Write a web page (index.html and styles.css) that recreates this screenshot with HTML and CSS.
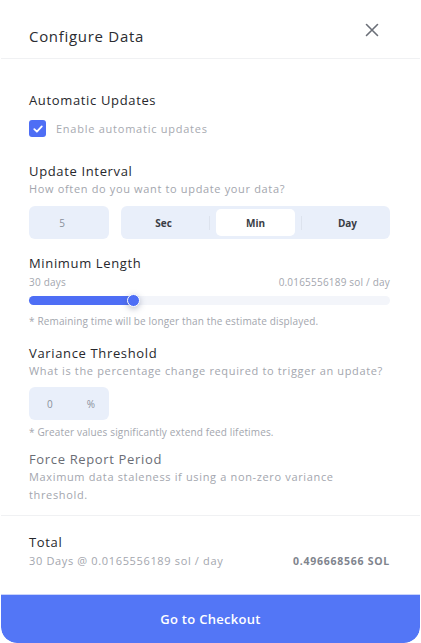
FILE: index.html
```html
<!DOCTYPE html>
<html>
<head>
<meta charset="utf-8">
<link rel="stylesheet" href="styles.css">
</head>
<body>
<div class="card">
  <header class="head">
    <h1 class="title">Configure Data</h1>
    <svg class="close" width="14" height="14" viewBox="0 0 14 14"><path d="M1.5 1.5 L12.5 12.5 M12.5 1.5 L1.5 12.5" stroke="#6b6f78" stroke-width="1.6" stroke-linecap="round"/></svg>
  </header>
  <main class="body">
    <section class="sec sec-auto">
      <h2 class="label">Automatic Updates</h2>
      <label class="check">
        <span class="box"><svg width="12" height="12" viewBox="0 0 12 12"><path d="M2.3 6.2 L4.9 8.7 L9.8 3.4" fill="none" stroke="#fff" stroke-width="1.8" stroke-linecap="round" stroke-linejoin="round"/></svg></span>
        <span class="check-text">Enable automatic updates</span>
      </label>
    </section>
    <section class="sec sec-interval">
      <h2 class="label">Update Interval</h2>
      <p class="desc">How often do you want to update your data?</p>
      <div class="row">
        <div class="field num">5</div>
        <div class="seg">
          <div class="opt">Sec</div>
          <div class="divi"></div>
          <div class="opt active">Min</div>
          <div class="divi"></div>
          <div class="opt">Day</div>
        </div>
      </div>
    </section>
    <section class="sec sec-length">
      <h2 class="label">Minimum Length</h2>
      <div class="meta"><span>30 days</span><span>0.0165556189 sol / day</span></div>
      <div class="track"><div class="fill" style="width:29%"><span class="thumb"></span></div></div>
      <p class="note">* Remaining time will be longer than the estimate displayed.</p>
    </section>
    <section class="sec sec-var">
      <h2 class="label">Variance Threshold</h2>
      <p class="desc">What is the percentage change required to trigger an update?</p>
      <div class="field pct"><span>0</span><span>%</span></div>
      <p class="note">* Greater values significantly extend feed lifetimes.</p>
    </section>
    <section class="sec sec-force">
      <h2 class="label muted">Force Report Period</h2>
      <p class="desc wrap">Maximum data staleness if using a non-zero variance threshold.</p>
    </section>
  </main>
  <footer class="total">
    <h2 class="label">Total</h2>
    <div class="total-row"><span class="desc">30 Days @ 0.0165556189 sol / day</span><span class="sum">0.496668566 SOL</span></div>
  </footer>
  <button class="checkout">Go to Checkout</button>
</div>
</body>
</html>
```
FILE: styles.css
```css
* { box-sizing: border-box; margin: 0; padding: 0; }
html, body { background: #fff; }
body { font-family: "Open Sans", "Noto Sans", sans-serif; color: #25262b; }
.card {
  width: 419px;
  margin: 0 1px;
  height: 643px;
  display: flex;
  flex-direction: column;
  background: #fff;
  border-radius: 0 0 16px 16px;
  overflow: hidden;
}
.head {
  height: 59px;
  display: flex;
  justify-content: space-between;
  align-items: flex-start;
  padding: 26px 41px 0 28px;
  border-bottom: 1px solid #f0f1f3;
}
.title { font-size: 15px; font-weight: 500; letter-spacing: 0.7px; color: #2b2c31; line-height: 20px; }
.close { margin-top: -3px; }
.body { padding: 0 30px 0 28px; flex: 1; }
.label { font-size: 13px; font-weight: 500; letter-spacing: 0.65px; color: #27282d; line-height: 18px; }
.label.muted { color: #6a6d75; }
.desc { font-size: 11px; color: #a3a6ae; letter-spacing: 0.65px; line-height: 18px; }
.sec-auto { padding-top: 32px; }
.check { display: flex; align-items: center; gap: 10px; margin-top: 11px; }
.box { width: 17px; height: 17px; border-radius: 3px; background: #4e6ef5; display: flex; align-items: center; justify-content: center; }
.check-text { font-size: 11px; color: #a7aab1; letter-spacing: 0.75px; }
.sec-interval { padding-top: 25px; }
.row { display: flex; gap: 12px; margin-top: 8px; }
.field { background: #e9effa; border-radius: 6px; height: 33px; font-size: 10px; color: #8a8f9a; display: flex; align-items: center; }
.num { width: 80px; justify-content: center; padding-right: 14px; }
.seg { flex: 1; background: #e9effa; border-radius: 6px; height: 33px; display: flex; align-items: center; padding: 3px; }
.opt { flex: 1; height: 27px; margin: 0 6px; display: flex; align-items: center; justify-content: center; font-size: 10px; font-weight: 700; color: #3a3d45; border-radius: 5px; }
.opt:first-child { margin-left: 0; }
.opt:last-child { margin-right: 0; }
.opt.active { background: #fff; }
.divi { width: 1px; height: 14px; background: #dde3ee; }
.sec-length { padding-top: 15px; }
.meta { display: flex; justify-content: space-between; font-size: 10px; letter-spacing: 0.2px; color: #a3a6ae; margin-top: 3px; line-height: 14px; }
.track { height: 9px; border-radius: 5px; background: #f3f5fa; margin-top: 7px; }
.fill { height: 9px; background: #4e6ef5; border-radius: 5px; position: relative; }
.thumb { position: absolute; right: -6px; top: -2px; width: 13px; height: 13px; border-radius: 50%; background: #4e6ef5; border: 1px solid #fff; box-shadow: 0 2px 6px rgba(60, 70, 110, 0.35); }
.note { font-size: 10px; letter-spacing: 0.15px; color: #a3a6ae; margin-top: 9px; line-height: 14px; }
.sec-var { padding-top: 16px; }
.pct { width: 80px; margin-top: 7px; justify-content: space-between; padding: 0 14px 0 18px; }
.sec-var .note { margin-top: 5px; }
.sec-force { padding-top: 11px; }
.wrap { max-width: 340px; }
.total { border-top: 1px solid #f0f1f3; padding: 17px 30px 0 28px; height: 79px; }
.total-row { display: flex; justify-content: space-between; align-items: center; margin-top: 1px; }
.sum { font-size: 10.5px; font-weight: 700; color: #80848d; letter-spacing: 0.75px; }
.checkout {
  height: 49px;
  border: none;
  border-top: 1px solid #c9d3fb;
  background: #5376f6;
  color: #fff;
  font-family: "Open Sans", sans-serif;
  font-size: 13px;
  font-weight: 600;
  letter-spacing: 0.3px;
  width: 100%;
  border-radius: 0 0 16px 16px;
}
```
